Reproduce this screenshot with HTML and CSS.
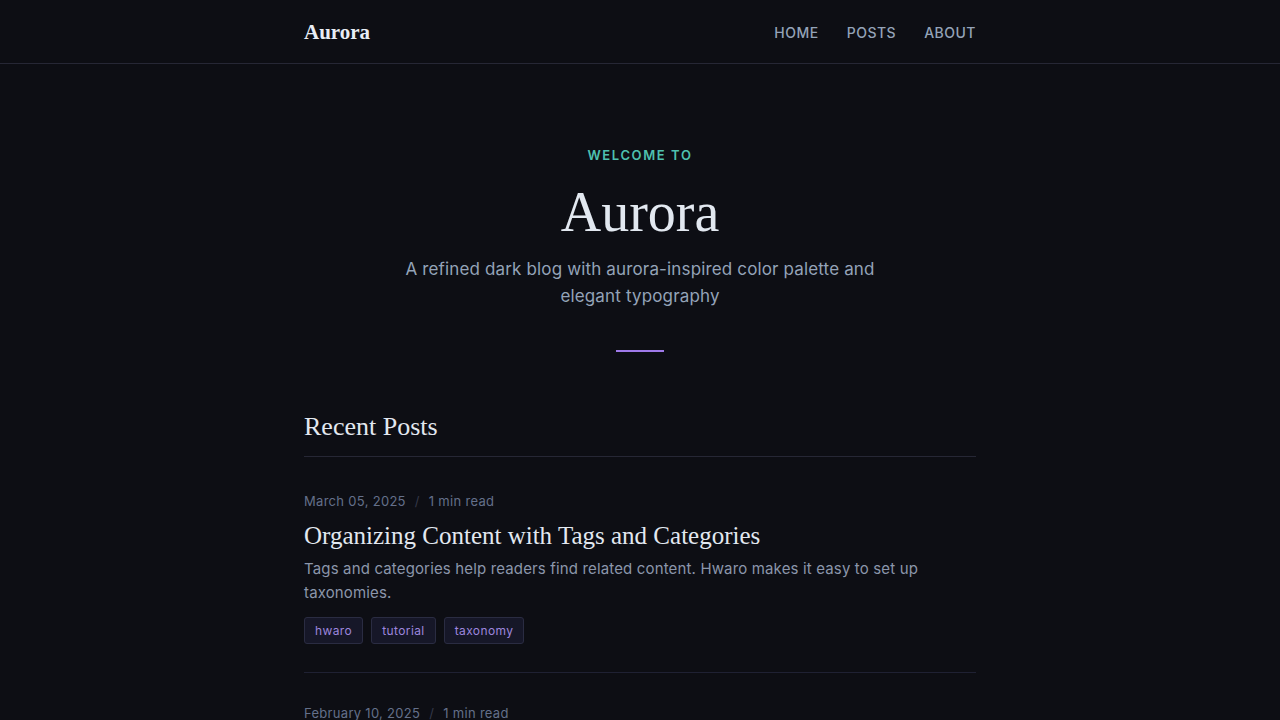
FILE: index.html
```html
<!DOCTYPE html>
<html lang="en">
<head>
<meta charset="utf-8">
<title>Aurora</title>
<link rel="stylesheet" href="styles.css">
</head>
<body>
<header class="site-header">
  <div class="container header-inner">
    <a class="logo" href="#">Aurora</a>
    <nav class="nav">
      <a href="#">Home</a>
      <a href="#">Posts</a>
      <a href="#">About</a>
    </nav>
  </div>
</header>
<main class="container">
  <section class="hero">
    <div class="eyebrow">Welcome to</div>
    <h1 class="hero-title">Aurora</h1>
    <p class="hero-sub">A refined dark blog with aurora-inspired color palette and elegant typography</p>
    <div class="hero-rule"></div>
  </section>
  <section class="recent">
    <h2 class="section-title">Recent Posts</h2>
    <article class="post">
      <div class="meta"><span>March 05, 2025</span><span class="sep">/</span><span>1 min read</span></div>
      <h3 class="post-title">Organizing Content with Tags and Categories</h3>
      <p class="excerpt">Tags and categories help readers find related content. Hwaro makes it easy to set up taxonomies.</p>
      <div class="tags"><a class="tag" href="#">hwaro</a><a class="tag" href="#">tutorial</a><a class="tag" href="#">taxonomy</a></div>
    </article>
    <article class="post">
      <div class="meta"><span>February 10, 2025</span><span class="sep">/</span><span>1 min read</span></div>
      <h3 class="post-title">Getting Started with Hwaro</h3>
      <p class="excerpt">Learn how to set up your first site with Hwaro, a fast and simple static site generator.</p>
      <div class="tags"><a class="tag" href="#">hwaro</a><a class="tag" href="#">tutorial</a></div>
    </article>
  </section>
</main>
</body>
</html>
```
FILE: styles.css
```css
* { box-sizing: border-box; }
html, body { margin: 0; padding: 0; }
body {
  background: #0d0e14;
  color: #e2e8f0;
  font-family: Inter, "Liberation Sans", sans-serif;
}
a { text-decoration: none; color: inherit; }
.container { width: 672px; margin: 0 auto; }
.site-header { border-bottom: 1px solid #262735; }
.header-inner {
  height: 63px;
  padding-top: 2px;
  display: flex;
  align-items: center;
  justify-content: space-between;
}
.logo {
  font-family: "Liberation Serif", serif;
  font-weight: 700;
  font-size: 21px;
  color: #e8edf5;
}
.nav { display: flex; gap: 28px; }
.nav a {
  font-size: 14px;
  font-weight: 500;
  text-transform: uppercase;
  letter-spacing: 0.5px;
  color: #94a3b8;
}
.hero {
  padding: 81px 0 58px;
  text-align: center;
  display: flex;
  flex-direction: column;
  align-items: center;
}
.eyebrow {
  font-size: 13px;
  line-height: 20px;
  font-weight: 600;
  letter-spacing: 1.6px;
  text-transform: uppercase;
  color: #4fc1b0;
}
.hero-title {
  margin: 13px 0 0;
  font-family: "Liberation Serif", serif;
  font-weight: 400;
  font-size: 56px;
  line-height: 68px;
  color: #e2e8f0;
}
.hero-sub {
  margin: 10px 0 0;
  max-width: 500px;
  font-size: 17px;
  line-height: 27px;
  letter-spacing: 0.15px;
  color: #94a3b8;
}
.hero-rule {
  margin-top: 40px;
  width: 48px;
  height: 2px;
  background: #9f7aea;
}
.section-title {
  margin: 0 0 4px;
  padding-bottom: 12px;
  border-bottom: 1px solid #262735;
  font-family: "Liberation Serif", serif;
  font-weight: 400;
  font-size: 26px;
  line-height: 34px;
  color: #e2e8f0;
}
.post {
  padding: 30px 0 28px;
  border-bottom: 1px solid #1f2133;
}
.meta {
  display: flex;
  gap: 9px;
  font-size: 13px;
  line-height: 20px;
  letter-spacing: 0.3px;
  color: #64708a;
}
.meta .sep { color: #343849; }
.post-title {
  margin: 10px 0 0;
  font-family: "Liberation Serif", serif;
  font-weight: 400;
  font-size: 25px;
  line-height: 30px;
  color: #e2e8f0;
}
.excerpt {
  margin: 6px 0 0;
  font-size: 15px;
  line-height: 24px;
  letter-spacing: 0.15px;
  color: #8b96ab;
}
.tags { display: flex; gap: 8px; margin-top: 12px; }
.tag {
  height: 27px;
  display: flex;
  align-items: center;
  padding: 0 10px;
  font-size: 12px;
  font-weight: 400;
  letter-spacing: 0.4px;
  color: #9d86de;
  background: #161728;
  border: 1px solid #2a2c42;
  border-radius: 3px;
}
```
